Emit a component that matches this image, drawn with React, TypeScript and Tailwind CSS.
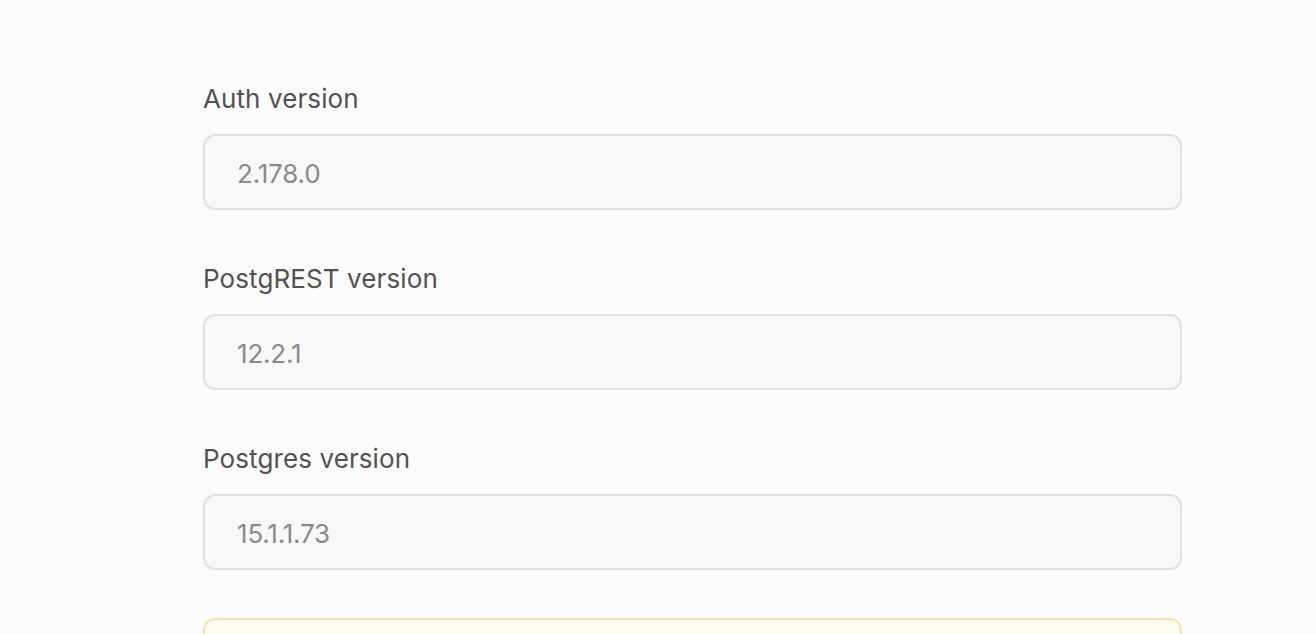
import React from "react";

const fields = [
  { label: "Auth version", value: "2.178.0" },
  { label: "PostgREST version", value: "12.2.1" },
  { label: "Postgres version", value: "15.1.1.73" },
];

export default function App() {
  return (
    <div
      className="w-[1316px] h-[634px] overflow-hidden bg-[#fcfcfc]"
      style={{ fontFamily: "Inter, 'Noto Sans', sans-serif" }}
    >
      <div className="ml-[203px] w-[979px] pt-[81px] flex flex-col">
        {fields.map((f) => (
          <div key={f.label} className="flex flex-col mb-[51px]">
            <label className="text-[26px] leading-[36px] text-[#525252] tracking-[0.1px]">
              {f.label}
            </label>
            <div className="mt-[17px] h-[76px] rounded-[12px] border-2 border-[#e0e0e0] bg-[#f8f8f8] flex items-center px-[32px] pt-[3px]">
              <span className="text-[26px] text-[#8a8a8a] tracking-[-0.2px]">{f.value}</span>
            </div>
          </div>
        ))}
        <div className="-mt-[3px] h-[80px] rounded-[12px] border-2 border-[#fbe3a4] bg-[#fdfbf4]" />
      </div>
    </div>
  );
}
